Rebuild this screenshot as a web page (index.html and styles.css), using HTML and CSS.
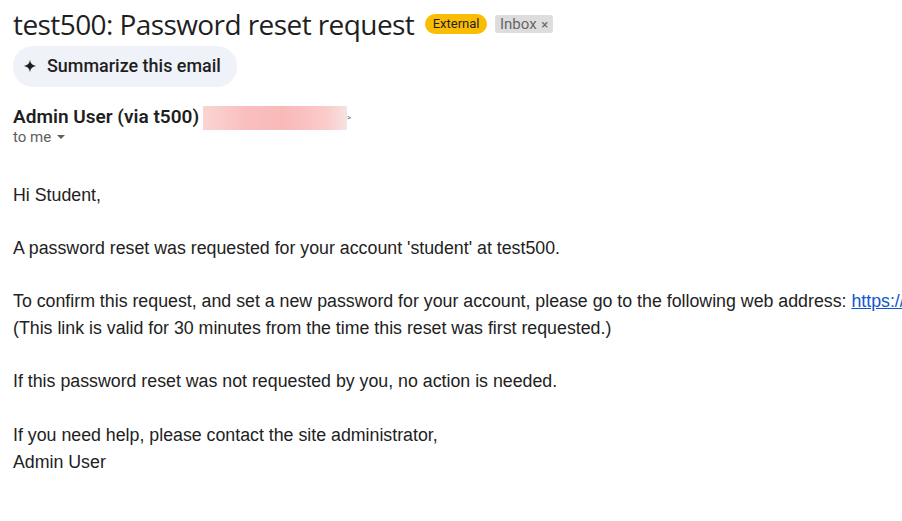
FILE: index.html
```html
<!DOCTYPE html>
<html lang="en">
<head>
<meta charset="utf-8">
<title>test500: Password reset request</title>
<link rel="stylesheet" href="styles.css">
</head>
<body>
<main class="mail">
  <header class="subject-row">
    <h1 class="subject">test500: Password reset request</h1>
    <span class="badge-external">External</span>
    <span class="badge-inbox">Inbox <span class="badge-x">×</span></span>
  </header>
  <button class="summarize" type="button">
    <svg class="spark" viewBox="0 0 14 14" width="14" height="14" aria-hidden="true"><path d="M7 0.5C7.5 4.6 9.4 6.5 13.5 7C9.4 7.5 7.5 9.4 7 13.5C6.5 9.4 4.6 7.5 0.5 7C4.6 6.5 6.5 4.6 7 0.5Z"/></svg>
    <span class="summarize-label">Summarize this email</span>
  </button>
  <div class="sender-row">
    <span class="sender">Admin User (via t500)</span>
    <span class="redacted"></span>
    <span class="chev">&gt;</span>
  </div>
  <div class="to-row">to me <span class="caret"></span></div>
  <article class="body">
    <p>Hi Student,</p>
    <p>A password reset was requested for your account 'student' at test500.</p>
    <p>To confirm this request, and set a new password for your account, please go to the following web address: <a href="#">https://</a><br>(This link is valid for 30 minutes from the time this reset was first requested.)</p>
    <p>If this password reset was not requested by you, no action is needed.</p>
    <p>If you need help, please contact the site administrator,<br>Admin User</p>
  </article>
</main>
</body>
</html>
```
FILE: styles.css
```css
html, body { margin: 0; padding: 0; background: #fff; overflow: hidden; }
body { width: 902px; height: 521px; font-family: "Roboto", "Liberation Sans", sans-serif; color: #1f1f1f; }
.mail { padding: 9px 0 0 13px; }
.subject-row { display: flex; align-items: center; height: 30px; white-space: nowrap; }
.subject { margin: 0; font: 400 28px/30px "Open Sans", "Roboto", sans-serif; letter-spacing: -0.58px; color: #1f1f1f; }
.badge-external { margin-left: 11px; height: 20px; padding: 0 7.5px; border-radius: 10px; background: #fbbc04; font-size: 13px; line-height: 20px; color: #1f1f1f; }
.badge-inbox { margin-left: 8px; height: 18px; padding: 0 4.5px 0 5px; border-radius: 3px; background: #dddddd; font-size: 15px; line-height: 18px; color: #666666; }
.badge-x { font-size: 13px; margin-left: 1px; }
.summarize { display: flex; align-items: center; gap: 10px; width: 224px; height: 41px; margin-top: 7px; padding: 0 0 2px 10px; border: 0; border-radius: 20px; background: #eff3f9; font: 500 17.95px/20px "Roboto", sans-serif; color: #1f1f1f; }
.spark { fill: #1f1f1f; flex: none; }
.sender-row { display: flex; align-items: center; height: 24px; margin-top: 18px; }
.sender { font-size: 19.05px; font-weight: 600; line-height: 24px; color: #1f1f1f; }
.redacted { align-self: flex-start; width: 144px; height: 24px; margin: 1px 0 0 4px; background: linear-gradient(90deg, #fbd4d4 0%, #f9bfbf 30%, #f9b9b9 55%, #fbcaca 85%, #f6e2e2 100%); }
.chev { font-size: 8px; color: #5e5e5e; }
.to-row { display: flex; align-items: center; font-size: 15px; line-height: 16px; color: #5e5e5e; }
.caret { width: 0; height: 0; margin-left: 6px; border-left: 4px solid transparent; border-right: 4px solid transparent; border-top: 4px solid #5e5e5e; }
.body { margin-top: 36.6px; font: 400 17.78px/26.7px "Liberation Sans", "Roboto", sans-serif; color: #222222; white-space: nowrap; }
.body p { margin: 0 0 26.7px; }
.body a { color: #1155cc; }
```
